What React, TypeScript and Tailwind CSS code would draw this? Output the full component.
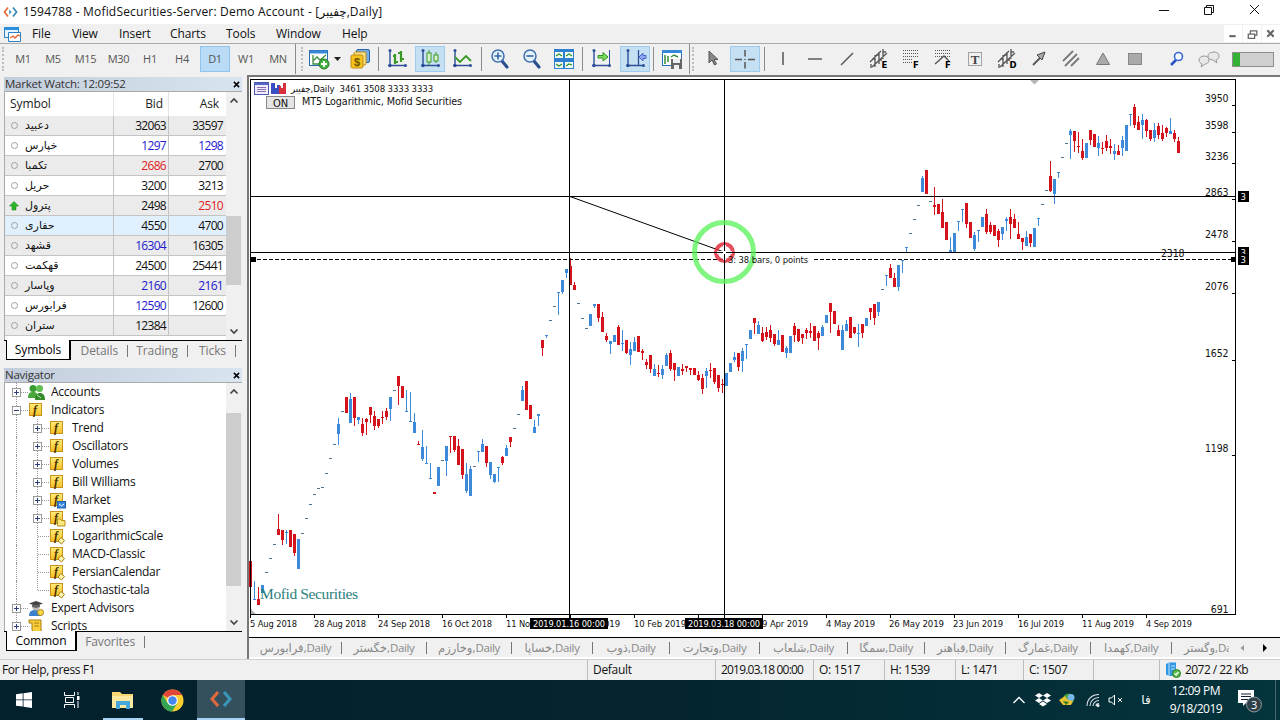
import React from 'react';
import clsx from 'clsx';

type Candle = [high: number, top: number, bottom: number, low: number, down: 0 | 1];

const UP = '#3c8ad8';
const DOWN = '#d4141c';

const CANDLES: Candle[] = [
    [561, 561, 587, 587, 1], [581, 599, 600, 600, 0], [587, 599, 605, 605, 1], [585, 585, 593, 593, 0], [572, 572, 573, 573, 0],
    [558, 558, 559, 559, 0], [544, 544, 545, 545, 0], [514, 529, 535, 535, 1], [530, 530, 540, 545, 1], [530, 532, 533, 544, 0],
    [530, 530, 547, 547, 1], [534, 534, 553, 556, 1], [539, 539, 569, 569, 0], [533, 533, 534, 534, 0], [518, 518, 519, 519, 0],
    [504, 504, 505, 505, 0], [494, 494, 495, 495, 0], [488, 488, 489, 489, 0], [487, 487, 488, 488, 0], [473, 473, 474, 474, 0],
    [458, 458, 459, 459, 0], [444, 444, 445, 445, 0], [418, 424, 434, 445, 0], [411, 411, 412, 412, 0], [397, 397, 413, 413, 1],
    [393, 399, 423, 423, 0], [397, 397, 418, 426, 1], [417, 417, 420, 424, 0], [418, 424, 433, 436, 1], [418, 419, 422, 435, 1],
    [407, 407, 415, 423, 1], [411, 416, 426, 430, 1], [419, 419, 426, 428, 1], [411, 417, 418, 424, 1], [408, 411, 417, 420, 1],
    [397, 397, 409, 421, 0], [390, 390, 391, 391, 0], [376, 376, 386, 405, 1], [386, 386, 398, 398, 1], [390, 411, 412, 412, 0],
    [392, 421, 422, 422, 0], [413, 422, 433, 433, 0], [441, 444, 445, 445, 1], [430, 447, 459, 461, 0], [446, 463, 464, 464, 0],
    [463, 478, 479, 479, 0], [492, 492, 494, 494, 1], [467, 467, 486, 486, 0], [460, 460, 461, 461, 0], [446, 446, 461, 476, 0],
    [436, 436, 437, 453, 1], [436, 436, 450, 452, 1], [439, 446, 465, 465, 1], [449, 449, 475, 479, 1], [463, 474, 491, 493, 0],
    [466, 469, 496, 496, 0], [466, 466, 467, 467, 0], [451, 451, 452, 462, 0], [439, 444, 452, 452, 0], [446, 446, 463, 467, 1],
    [462, 462, 475, 479, 0], [474, 474, 482, 483, 0], [467, 467, 468, 482, 0], [456, 457, 463, 465, 1], [445, 448, 456, 456, 0],
    [437, 437, 442, 447, 1], [428, 428, 429, 429, 0], [414, 414, 415, 415, 0], [386, 390, 401, 401, 0], [381, 381, 410, 410, 1],
    [405, 405, 419, 419, 1], [420, 427, 433, 433, 0], [414, 414, 416, 426, 0], [340, 340, 348, 356, 1], [335, 335, 336, 338, 0],
    [320, 320, 321, 321, 0], [306, 306, 307, 307, 0], [292, 292, 293, 315, 0], [280, 280, 292, 294, 0], [269, 269, 273, 278, 0],
    [258, 266, 285, 285, 1], [282, 285, 290, 290, 1], [303, 303, 304, 304, 0], [318, 318, 319, 319, 0], [328, 328, 329, 329, 0],
    [314, 314, 326, 326, 0], [304, 304, 306, 308, 0], [304, 304, 318, 322, 1], [312, 317, 332, 332, 1], [333, 336, 340, 342, 1],
    [341, 341, 344, 354, 0], [335, 335, 342, 342, 0], [325, 327, 345, 345, 1], [330, 343, 344, 351, 0], [340, 340, 353, 354, 1],
    [342, 349, 355, 365, 0], [337, 342, 351, 351, 0], [336, 336, 352, 352, 1], [349, 351, 353, 360, 1], [359, 362, 365, 369, 1],
    [355, 355, 369, 373, 1], [364, 369, 376, 376, 0], [365, 373, 374, 377, 1], [365, 369, 375, 379, 0], [353, 355, 366, 366, 0],
    [350, 353, 369, 371, 1], [363, 363, 370, 381, 1], [367, 367, 376, 376, 0], [364, 369, 371, 375, 1], [366, 366, 368, 372, 1],
    [368, 368, 370, 375, 1], [368, 368, 375, 375, 1], [371, 375, 380, 381, 1], [374, 378, 389, 394, 1], [368, 371, 376, 388, 0],
    [363, 370, 371, 378, 1], [368, 368, 382, 384, 1], [375, 375, 388, 392, 1], [379, 384, 385, 393, 1], [373, 373, 386, 386, 0],
    [363, 363, 372, 372, 0], [352, 357, 360, 362, 0], [353, 353, 367, 371, 1], [348, 351, 361, 372, 0], [344, 344, 345, 359, 0],
    [330, 330, 339, 339, 0], [318, 318, 323, 334, 1], [321, 325, 334, 334, 0], [327, 333, 341, 342, 1], [327, 332, 337, 340, 1],
    [325, 330, 338, 342, 1], [334, 334, 344, 346, 1], [330, 340, 345, 345, 0], [335, 335, 352, 352, 1], [346, 348, 353, 358, 0],
    [336, 336, 353, 353, 0], [323, 326, 335, 342, 1], [329, 329, 341, 342, 1], [334, 334, 338, 344, 1], [328, 330, 333, 339, 1],
    [323, 331, 333, 338, 1], [326, 326, 341, 341, 1], [331, 333, 338, 350, 1], [325, 327, 336, 336, 0], [315, 315, 323, 323, 0],
    [303, 303, 312, 333, 1], [311, 311, 324, 324, 1], [325, 330, 336, 336, 1], [325, 330, 350, 350, 0], [320, 324, 331, 331, 0],
    [317, 317, 338, 338, 1], [327, 327, 333, 334, 1], [324, 333, 334, 347, 0], [324, 324, 333, 338, 1], [318, 318, 326, 326, 0],
    [308, 308, 312, 320, 1], [304, 304, 318, 325, 1], [302, 302, 312, 316, 0], [289, 289, 290, 290, 0], [275, 275, 276, 286, 0],
    [264, 268, 278, 278, 1], [273, 278, 287, 287, 1], [265, 265, 287, 291, 0], [260, 260, 261, 273, 0], [247, 247, 248, 252, 0],
    [233, 233, 234, 234, 0], [219, 219, 220, 220, 0], [205, 205, 206, 206, 0], [176, 178, 192, 192, 0], [170, 170, 194, 194, 1],
    [201, 201, 202, 202, 0], [187, 205, 207, 215, 1], [204, 204, 214, 214, 1], [199, 212, 228, 228, 1], [222, 222, 240, 240, 1],
    [237, 250, 252, 252, 0], [233, 233, 253, 253, 0], [221, 221, 222, 231, 0], [209, 209, 210, 222, 0], [203, 203, 224, 228, 1],
    [222, 222, 238, 238, 1], [232, 235, 249, 251, 0], [230, 230, 231, 242, 0], [217, 217, 227, 227, 0], [209, 214, 232, 234, 1],
    [222, 225, 232, 234, 1], [225, 225, 236, 236, 1], [229, 231, 240, 247, 1], [227, 227, 234, 240, 0], [217, 219, 221, 231, 0],
    [209, 217, 224, 239, 1], [214, 219, 228, 228, 1], [222, 234, 239, 239, 1], [238, 238, 242, 250, 1], [231, 237, 246, 246, 0],
    [234, 234, 243, 247, 1], [228, 228, 247, 247, 0], [218, 218, 219, 226, 0], [204, 204, 205, 205, 0], [190, 190, 191, 191, 0],
    [161, 176, 191, 192, 1], [179, 179, 194, 204, 0], [172, 172, 173, 178, 0], [157, 157, 158, 158, 0], [143, 143, 144, 144, 0],
    [129, 131, 135, 159, 0], [131, 131, 141, 152, 1], [132, 146, 147, 153, 1], [139, 151, 158, 160, 1], [143, 143, 158, 158, 0],
    [130, 130, 140, 145, 1], [134, 134, 147, 147, 1], [136, 143, 148, 156, 0], [142, 148, 149, 154, 1], [135, 141, 148, 151, 1],
    [139, 146, 148, 154, 1], [144, 151, 154, 160, 0], [145, 151, 155, 155, 1], [136, 140, 148, 156, 0], [125, 125, 151, 151, 0],
    [114, 114, 115, 126, 0], [104, 107, 125, 128, 1], [116, 122, 130, 130, 1], [114, 120, 125, 139, 0], [119, 120, 131, 137, 1],
    [130, 130, 139, 141, 1], [123, 130, 138, 142, 0], [123, 126, 135, 139, 1], [125, 133, 139, 141, 1], [127, 128, 133, 137, 1],
    [118, 131, 134, 134, 0], [130, 133, 139, 142, 1], [137, 141, 153, 153, 1],
];

const PRICES: [string, number][] = [
    ['3950', 98], ['3598', 125], ['3236', 156], ['2863', 192], ['2478', 234],
    ['2076', 286], ['1652', 353], ['1198', 448], ['691', 609],
];

const DATES: [string, number, number][] = [
    ['5 Aug 2018', 250, 47], ['28 Aug 2018', 314, 52], ['24 Sep 2018', 378, 52], ['16 Oct 2018', 442, 50], ['11 Nov 2018', 506, 52],
    ['17 Jan 2019', 570, 50], ['10 Feb 2019', 634, 52], ['9 Apr 2019', 762, 46], ['4 May 2019', 826, 49], ['26 May 2019', 889, 55],
    ['23 Jun 2019', 953, 50], ['16 Jul 2019', 1018, 46], ['11 Aug 2019', 1082, 52], ['4 Sep 2019', 1146, 46],
];

const BLACK = '#111';
const BLUE = '#2418cc';
const RED = '#e01c24';

const QUOTES = [
    { name: 'دعبید', bid: '32063', ask: '33597', bc: BLACK, ac: BLACK },
    { name: 'خپارس', bid: '1297', ask: '1298', bc: BLUE, ac: BLUE },
    { name: 'تکمبا', bid: '2686', ask: '2700', bc: RED, ac: BLACK },
    { name: 'حریل', bid: '3200', ask: '3213', bc: BLACK, ac: BLACK },
    { name: 'پترول', bid: '2498', ask: '2510', bc: BLACK, ac: RED, up: true },
    { name: 'حفاری', bid: '4550', ask: '4700', bc: BLACK, ac: BLACK, active: true },
    { name: 'قشهد', bid: '16304', ask: '16305', bc: BLUE, ac: BLACK },
    { name: 'قهکمت', bid: '24500', ask: '25441', bc: BLACK, ac: BLACK },
    { name: 'وپاسار', bid: '2160', ask: '2161', bc: BLUE, ac: BLUE },
    { name: 'فرابورس', bid: '12590', ask: '12600', bc: BLUE, ac: BLACK },
    { name: 'ستران', bid: '12384', ask: '', bc: BLACK, ac: BLACK },
];

type NodeIcon = 'accounts' | 'f' | 'market' | 'folder' | 'custom' | 'expert' | 'script';

const TREE: { label: string; level: 0 | 1; icon: NodeIcon; box?: '+' | '-' }[] = [
    { label: 'Accounts', level: 0, icon: 'accounts', box: '+' },
    { label: 'Indicators', level: 0, icon: 'f', box: '-' },
    { label: 'Trend', level: 1, icon: 'f', box: '+' },
    { label: 'Oscillators', level: 1, icon: 'f', box: '+' },
    { label: 'Volumes', level: 1, icon: 'f', box: '+' },
    { label: 'Bill Williams', level: 1, icon: 'f', box: '+' },
    { label: 'Market', level: 1, icon: 'market', box: '+' },
    { label: 'Examples', level: 1, icon: 'folder', box: '+' },
    { label: 'LogarithmicScale', level: 1, icon: 'custom' },
    { label: 'MACD-Classic', level: 1, icon: 'custom' },
    { label: 'PersianCalendar', level: 1, icon: 'custom' },
    { label: 'Stochastic-tala', level: 1, icon: 'custom' },
    { label: 'Expert Advisors', level: 0, icon: 'expert', box: '+' },
    { label: 'Scripts', level: 0, icon: 'script', box: '+' },
];

const CHART_TABS: [string, string][] = [
    ['فرابورس', 'w-[92px]'], ['خگستر', 'w-[85px]'], ['وخارزم', 'w-[85px]'], ['خساپا', 'w-[81px]'], ['ذوب', 'w-[77px]'], ['وتجارت', 'w-[90px]'],
    ['شلعاب', 'w-[88px]'], ['سمگا', 'w-[77px]'], ['فباهنر', 'w-[81px]'], ['غمارگ', 'w-[85px]'], ['کهمدا', 'w-[81px]'],
];

const Glyph = ({ children, className = 'w-6 h-6' }: { children: React.ReactNode; className?: string }) => (
    <svg viewBox="0 0 24 24" fill="none" className={clsx('shrink-0', className)}>{children}</svg>
);

const Axes = () => (
    <>
        <path d="M5 3V20M3 18.5H21" stroke="#2c4f98" strokeWidth="1.4" />
        <circle cx="5" cy="3.5" r="1.5" fill="#2c4f98" />
        <circle cx="5" cy="18.5" r="1.7" fill="#2c4f98" />
        <circle cx="20.5" cy="18.5" r="1.5" fill="#2c4f98" />
    </>
);

const Slot = ({ children, on = false, className }: { children: React.ReactNode; on?: boolean; className?: string }) => (
    <div className={clsx('w-8 h-full flex items-center justify-center shrink-0', className)}>
        <div className={clsx('w-[30px] h-[26px] flex items-center justify-center', on && 'bg-[#c5dff3] border border-[#9ccbee]')}>{children}</div>
    </div>
);

const Sep = ({ className }: { className?: string }) => <div className={clsx('w-px bg-[#8c8c8c] shrink-0', className)} />;
const Grip = ({ className }: { className?: string }) => <div className={clsx('h-6 border-l-2 border-dotted border-[#bdbdbd] shrink-0', className)} />;

const ChannelGlyph = ({ letter }: { letter: string }) => (
    <Glyph>
        <path d="M3 15L14 4M5 20L20 6M8 8v12M4 17v4M12 5v12M16 2v10M12 8h-3M16 5h3M8 12H5M12 13h3" stroke="#555" strokeWidth="1.3" />
        <text x="14.5" y="21" fontSize="8.5" fontWeight="900" fill="#000" fontFamily="DejaVu Sans">{letter}</text>
    </Glyph>
);

const FiboGlyph = ({ fan = false }: { fan?: boolean }) => (
    <Glyph>
        <path d={fan ? 'M4 3.5h15M4 6.5h15M4 9.5h15' : 'M4 3.5h15M4 6.5h15M4 9.5h15M4 12.5h9M4 15.5h9'} stroke="#555" strokeWidth="1" strokeDasharray="1 1" />
        {fan && <path d="M4 17L13 9L18 14" stroke="#555" strokeWidth="1.4" />}
        <text x="14" y="21" fontSize="8.5" fontWeight="900" fill="#000" fontFamily="DejaVu Sans">F</text>
    </Glyph>
);

const FRAMES: [string, string][] = [
    ['M1', 'w-[30px]'], ['M5', 'w-[30px]'], ['M15', 'w-[35px]'], ['M30', 'w-[31px]'], ['H1', 'w-8'],
    ['H4', 'w-[34px] pr-0.5'], ['D1', 'w-[30px]'], ['W1', 'w-8'], ['MN', 'w-8'],
];

const Toolbar = () => (
    <div className="h-8 flex items-center bg-[#f0f0f0] border-t border-[#a9a9a9] pb-px shrink-0">
        <Grip className="ml-0.5 mr-1" />
        {FRAMES.map(([label, width]) => (
            <div key={label} className={clsx('h-[26px] flex items-center justify-center shrink-0 text-[11px] text-[#555] tracking-[-0.3px]', width, label === 'D1' && 'bg-[#b9dbf5] border border-[#8fc4ee]')}>{label}</div>
        ))}
        <Sep className="ml-px h-7.5" />
        <Grip className="ml-[5px]" />
        <Slot>
            <Glyph>
                <rect x="2.5" y="3.5" width="18" height="15" fill="#fff" stroke="#2a6db5" />
                <path d="M3 5h17" stroke="#3588d8" strokeWidth="3" />
                <path d="M6 8v9h8M6 14l4-4 3 3 6-5" stroke="#3b8d3b" strokeWidth="1.3" />
                <circle cx="17" cy="17" r="5" fill="#42b23e" stroke="#267a26" />
                <path d="M17 14v6M14 17h6" stroke="#fff" strokeWidth="1.8" />
            </Glyph>
        </Slot>
        <svg viewBox="0 0 8 5" className="w-2 h-[5px] -ml-px mr-0.5"><path d="M0 0h7L3.5 4z" fill="#222" /></svg>
        <Slot>
            <Glyph>
                <rect x="8.5" y="2.5" width="13" height="13" rx="1.5" fill="#77aae4" stroke="#2b62ac" />
                <rect x="6" y="5" width="12" height="13" rx="1.5" fill="#f8e28a" stroke="#b78a13" />
                <rect x="3" y="8" width="12" height="13" rx="1.5" fill="#f4c21c" stroke="#c08a10" />
                <text x="6" y="18.500" fontSize="11" fontWeight="700" fill="#6b5200" fontFamily="Liberation Sans">$</text>
            </Glyph>
        </Slot>
        <Sep className="h-6 ml-0.5 mr-0.5" />
        <Slot>
            <Glyph><Axes /><path d="M10 7v10M10 9h-2M10 15h3M16 4v11M16 6h-3M16 12h3" stroke="#3a9a28" strokeWidth="2.2" /></Glyph>
        </Slot>
        <Slot on className="ml-px">
            <Glyph><Axes /><path d="M11 3v15M18 5v11" stroke="#3a9a28" /><rect x="9" y="6" width="4" height="9" fill="#d8f4c8" stroke="#3a9a28" /><rect x="16" y="8" width="4" height="6" fill="#d8f4c8" stroke="#3a9a28" /></Glyph>
        </Slot>
        <Slot>
            <Glyph><Axes /><path d="M5 10l5 5 6-6 5 5" stroke="#3a9a28" strokeWidth="1.8" /></Glyph>
        </Slot>
        <Sep className="h-6 ml-[3px] mr-0.5" />
        {['M9 5.5v7M5.5 9h7', 'M5.5 9h7'].map((d) => (
            <Slot key={d}>
                <Glyph>
                    <path d="M14 14l5 6" stroke="#2a4f8d" strokeWidth="3.2" strokeLinecap="round" />
                    <circle cx="10" cy="9" r="6" fill="#e6f1fb" stroke="#3e6fae" strokeWidth="1.5" />
                    <path d={d} transform="translate(1 0)" stroke="#3565a5" strokeWidth="1.6" />
                </Glyph>
            </Slot>
        ))}
        <Slot>
            <Glyph>
                <path d="M2 2h20v20H2z" fill="#2f7fd0" />
                <path d="M3 5h8v6H3zM13 5h8v6h-8zM3 15h8v6H3zM13 15h8v6h-8z" fill="#effaf0" />
                <path d="M4 9l3-2 3 2M14 9l3-2 3 2M4 17l3 2 3-2M14 19l3-2 3 1" stroke="#2d8c2d" strokeWidth="1.2" />
            </Glyph>
        </Slot>
        <Sep className="h-6 mx-0.5" />
        <Slot>
            <Glyph><Axes /><path d="M20.5 3v15" stroke="#2c4f98" /><path d="M9 8.500h5V5.500l5 4.500-5 4v-3H9z" fill="#7cdc5c" stroke="#2e9724" /></Glyph>
        </Slot>
        <Slot on className="ml-0.5">
            <Glyph><Axes /><path d="M15.5 3v15" stroke="#2c4f98" strokeWidth="1.3" /><path d="M23 8.500h-3V6l-4 4 4 4v-2.500h3z" fill="#8fa8f5" stroke="#4666cc" /></Glyph>
        </Slot>
        <Sep className="h-6 mx-0.5" />
        <Slot>
            <Glyph>
                <rect x="2.500" y="3.500" width="19" height="15" fill="#fff" stroke="#2a6db5" />
                <path d="M2 4.500h20" stroke="#3588d8" strokeWidth="3" />
                <path d="M5 8v9M8 9v6M11 10l3-2 4 2" stroke="#3b8d3b" strokeWidth="1.5" />
                <path d="M11 12h11v10H11z" fill="#666" /><path d="M13 12h7v4h-7zM14 18h5v4h-5z" fill="#eee" />
            </Glyph>
        </Slot>
        <Sep className="ml-px h-7.5" />
        <Grip className="ml-0.5 mr-0.5" />
        <Slot><Glyph><path d="M9 4v12l3-3 2.500 5 2-1-2.500-4.500h4z" fill="#888" stroke="#555" /></Glyph></Slot>
        <Slot on className="ml-px"><Glyph><path d="M12 3v6.500M12 15v6.500M2 12.500h7M15 12.500h7M12 12v1" stroke="#555" strokeWidth="1.5" /></Glyph></Slot>
        <Sep className="h-6 ml-[3px] mr-0.5" />
        <Slot><Glyph><path d="M12 5v13" stroke="#555" strokeWidth="1.5" /></Glyph></Slot>
        <Slot><Glyph><path d="M5 12h14" stroke="#666" strokeWidth="1.6" /></Glyph></Slot>
        <Slot><Glyph><path d="M6 18L18 6" stroke="#555" strokeWidth="1.5" /></Glyph></Slot>
        <Slot><ChannelGlyph letter="E" /></Slot>
        <Slot><FiboGlyph /></Slot>
        <Slot><FiboGlyph fan /></Slot>
        <Slot>
            <Glyph>
                <rect x="5.500" y="5.500" width="13" height="13" stroke="#555" strokeDasharray="1 1" />
                <text x="7.700" y="17" fontSize="13" fontWeight="700" fill="#444" fontFamily="Liberation Serif">T</text>
            </Glyph>
        </Slot>
        <Slot><ChannelGlyph letter="D" /></Slot>
        <Slot><Glyph><path d="M6 18l7-7" stroke="#555" strokeWidth="1.8" /><path d="M18 5l-8 3 5 5z" fill="#aaa" stroke="#444" /></Glyph></Slot>
        <Slot><Glyph><path d="M4 14L14 4M6 19L18 7M12 19l8-8" stroke="#777" strokeWidth="1.8" /></Glyph></Slot>
        <Slot><Glyph><path d="M12 6l6.500 11.500h-13z" fill="#aaa" stroke="#777" /></Glyph></Slot>
        <Slot><Glyph><rect x="5.500" y="6.500" width="13" height="11" fill="#aaa" stroke="#888" /></Glyph></Slot>
        <div className="w-2.5 shrink-0" />
        <Slot><Glyph><path d="M6 18l5-5" stroke="#2850c8" strokeWidth="2.500" /><circle cx="13.500" cy="9.500" r="4" fill="#f2f8ff" stroke="#3b66d0" strokeWidth="1.600" /></Glyph></Slot>
        <Slot>
            <Glyph>
                <path d="M17 5c3 0 5 1.500 5 4s-1 3-3 4l1 3-4-3c-3 0-5-1.500-5-4s3-4 6-4z" fill="#e8e8e8" stroke="#999" />
                <path d="M7 9c3 0 5 1.500 5 4s-2 4-4 4l-4 3 1-3c-2-1-3-2-3-4s2-4 5-4z" fill="#e8e8e8" stroke="#999" />
            </Glyph>
        </Slot>
        <div className="ml-[7px] w-[42px] h-[15px] border border-[#8d8d8d] bg-[#d0d0d0] shrink-0"><div className="w-[7px] h-full bg-[#35b135]" /></div>
    </div>
);

const PanelTitle = ({ children }: { children: React.ReactNode }) => (
    <div className="h-3.5 flex items-center justify-between bg-gradient-to-r from-[#c3cddb] to-[#d9e4f1] pl-px pr-0.5 text-[11.5px] leading-none text-[#333] tracking-[-0.25px] shrink-0">
        <span>{children}</span>
        <svg viewBox="0 0 8 8" className="w-[7px] h-[7px]"><path d="M1 1l6 6M7 1L1 7" stroke="#000" strokeWidth="1.700" /></svg>
    </div>
);

const Arrow = ({ flip = false }: { flip?: boolean }) => (
    <svg viewBox="0 0 16 17" className={clsx('w-4 h-[17px] shrink-0', flip && 'rotate-180')}><path d="M4.500 10.500L8 7l3.500 3.500" fill="none" stroke="#444" strokeWidth="1.700" /></svg>
);

const ScrollBar = ({ thumb }: { thumb: string }) => (
    <div className="w-4 flex flex-col bg-[#f0f0f0] shrink-0">
        <Arrow />
        <div className="flex-1"><div className={clsx('w-[15px] bg-[#cdcdcd]', thumb)} /></div>
        <Arrow flip />
    </div>
);

const PanelTabs = ({ active, width, rest }: { active: string; width: string; rest: [string, string][] }) => (
    <div className="flex items-start border-t border-black h-[22px] pl-0.5 text-[12px] text-[#777] shrink-0">
        <div className={clsx('h-5 -mt-px bg-white border border-t-0 border-black border-r-2 flex items-center justify-center text-black', width)}>{active}</div>
        {rest.map(([label, w]) => (
            <div key={label} className={clsx('h-[19px] flex items-center justify-end', w)}>{label}<span className="w-px h-3 bg-[#777] ml-[9px]" /></div>
        ))}
    </div>
);

const MarketWatch = () => (
    <section className="h-[286px] flex flex-col shrink-0">
        <PanelTitle>Market Watch: 12:09:52</PanelTitle>
        <div className="h-[249px] flex border-l border-t border-[#aaa] bg-white shrink-0">
            <div className="flex-1 overflow-hidden">
                <div className="h-[24px] flex items-center text-[12px] text-[#222]">
                    <span className="w-[109px] h-full flex items-center pl-[5px] border-r border-[#e5e5e5]">Symbol</span>
                    <span className="w-[55px] h-full flex items-center justify-end pr-[5px] border-r border-[#e5e5e5]">Bid</span>
                    <span className="w-14 text-right pr-1.5">Ask</span>
                </div>
                {QUOTES.map((q, i) => (
                    <div key={q.name} className={clsx('h-5 flex items-center text-[12px] border-b border-[#c4c4c4]', q.active ? 'bg-[#e0f0fc]' : i % 2 ? 'bg-white' : 'bg-[#ebebeb]')}>
                        <div className="w-[109px] h-full flex items-center pl-[5px] border-r border-[#c4c4c4] text-[#111]">
                            {q.up
                                ? <svg viewBox="0 0 10 10" className="w-2.5 h-2.5 -ml-px mr-1.5"><path d="M5 .5L9.500 5H7v4H3V5H.5z" fill="#2fb52a" stroke="#1c8a1c" strokeWidth=".6" /></svg>
                                : <span className="w-[7px] h-[7px] rounded-full border-[1.5px] border-[#a0a0a0] ml-px mr-[7px]" />}
                            <span dir="rtl" className="text-[11px]">{q.name}</span>
                        </div>
                        <span className="w-[55px] h-full flex items-center justify-end pr-0.5 border-r border-[#c4c4c4] tracking-[-0.7px]" style={{ color: q.bc }}>{q.bid}</span>
                        <span className="w-14 text-right pr-0.5 tracking-[-0.7px]" style={{ color: q.ac }}>{q.ask}</span>
                    </div>
                ))}
            </div>
            <ScrollBar thumb="mt-[107px] h-[69px]" />
        </div>
        <PanelTabs active="Symbols" width="w-[65px]" rest={[['Details', 'w-[57px]'], ['Trading', 'w-[60px]'], ['Ticks', 'w-[48px]']]} />
    </section>
);

const TreeIcon = ({ kind }: { kind: NodeIcon }) => {
    if (kind === 'accounts') {
        return (
            <svg viewBox="0 0 17 17" className="w-[17px] h-[17px] shrink-0">
                <circle cx="5" cy="4.500" r="3.500" fill="#3a9b31" /><circle cx="11.500" cy="4.500" r="3.500" fill="#5fc04f" />
                <path d="M0 14c0-5 2-6 5-6s5 1 5 6z" fill="#48a83c" /><path d="M7 16c0-5 2-7 5-7s5 2 5 7z" fill="#368b2c" /><path d="M9 11l4 3" stroke="#b8eeb0" />
            </svg>
        );
    }
    if (kind === 'expert') {
        return (
            <svg viewBox="0 0 17 17" className="w-[17px] h-[17px] shrink-0">
                <path d="M1 16c0-4 2-6 6-6s6 2 6 6z" fill="#3b80cc" /><circle cx="8" cy="7" r="3.500" fill="#b9b9b9" />
                <path d="M1 3.500L8 1l7 2.500L8 6z" fill="#444" /><path d="M4 5v2l4 1 4-1V5" fill="#666" /><circle cx="12.500" cy="12.500" r="3" fill="#fbdc48" stroke="#a97c10" />
            </svg>
        );
    }
    if (kind === 'script') {
        return (
            <svg viewBox="0 0 17 17" className="w-[17px] h-[17px] shrink-0">
                <path d="M1 2h12v10l3 3H6l-2-3V5H1z" fill="#f8cf3a" stroke="#a97c10" /><path d="M6 5h5M6 8h5" stroke="#a97c10" />
            </svg>
        );
    }
    return (
        <svg viewBox="0 0 17 17" className="w-[17px] h-[17px] shrink-0">
            <defs><linearGradient id="gold" x1="0" y1="0" x2="0" y2="1"><stop stopColor="#ffee7a" /><stop offset="1" stopColor="#f6bf24" /></linearGradient></defs>
            <rect x="1.500" y="1.500" width="12" height="12" fill="url(#gold)" stroke="#c9921a" />
            <text x="5" y="11.500" fontSize="12" fontStyle="italic" fontWeight="700" fontFamily="Liberation Serif" fill="#4a3200">f</text>
            {kind === 'market' && <><rect x="8.500" y="9.500" width="8" height="6.500" fill="#3c87dc" stroke="#1f60b0" /><path d="M10 12l2.500 2 2.500-2" fill="none" stroke="#fff" /></>}
            {kind === 'folder' && <path d="M8.500 9h3l1 1.500H16V16H8.500z" fill="#fbe77a" stroke="#b98d1c" />}
            {kind === 'custom' && <path d="M12 9.500l3.500 3-3 3.500-3.500-3z" fill="#fff4b0" stroke="#a97c10" />}
        </svg>
    );
};

const Navigator = () => (
    <section className="flex flex-col">
        <PanelTitle>Navigator</PanelTitle>
        <div className="h-[249px] flex border-l border-t border-[#aaa] bg-white shrink-0">
            <div className="flex-1 overflow-hidden">
                {TREE.map((n, i) => (
                    <div key={n.label} className="h-[18px] flex items-center text-[12px] text-[#111] tracking-[-0.25px]">
                        {n.level === 1 && (
                            <span className="w-[21px] h-full shrink-0 flex"><span className="ml-[11px] h-full border-l border-dotted border-[#999]" /></span>
                        )}
                        <svg viewBox="1 0 23 18" className="w-[23px] h-[18px] shrink-0">
                            <path d={i === 11 ? 'M12.500 0v9' : 'M12.500 0v18'} stroke="#999" strokeDasharray="1 1" />
                            <path d="M13 9.500h11" stroke="#999" strokeDasharray="1 1" />
                            {n.box && <><rect x="8.500" y="5.500" width="8" height="8" fill="#fff" stroke="#999" /><path d={n.box === '+' ? 'M10 9.500h5M12.500 7v5' : 'M10 9.500h5'} stroke="#2b3f7a" /></>}
                        </svg>
                        <TreeIcon kind={n.icon} />
                        <span className="ml-[6px] whitespace-nowrap">{n.label}</span>
                    </div>
                ))}
            </div>
            <ScrollBar thumb="mt-[13px] h-[173px]" />
        </div>
        <PanelTabs active="Common" width="w-[71px]" rest={[['Favorites', 'w-[68px]']]} />
    </section>
);

const ChartText = ({ x, y, w, children, fill = '#111', size = 11, end = false }: { x: number; y: number; w: number; children: string; fill?: string; size?: number; end?: boolean }) => (
    <text x={x} y={y} textLength={w} lengthAdjust="spacingAndGlyphs" fontSize={size} fill={fill} textAnchor={end ? 'end' : 'start'} fontFamily="'DejaVu Sans Condensed', 'DejaVu Sans', sans-serif">{children}</text>
);

const Chart = () => (
    <svg viewBox="249 77 1029 560" className="w-[1029px] h-[560px] block shrink-0">
        <rect x="249" y="77" width="1029" height="560" fill="#fff" />
        <g shapeRendering="crispEdges">
            {CANDLES.map(([high, top, bottom, low, down], i) => {
                const x = 250 + i * 4;
                const flat = low - high === 1;
                const color = down ? DOWN : flat ? '#50708c' : UP;
                return (
                    <g key={i} fill={color}>
                        <rect x={x} y={high} width="1" height={low - high} />
                        <rect x={x - 1} y={top} width="3" height={bottom - top} />
                    </g>
                );
            })}
        </g>
        <text x="260" y="599" textLength="98" fontSize="15.500" fill="#2a8080" fontFamily="Liberation Serif">Mofid Securities</text>
        <path d="M251 609l5 5h-5zM1030 80h9l-4.500 4.500z" fill="#b5b5b5" />

        <g shapeRendering="crispEdges" stroke="#000" fill="none">
            <path d="M250.500 79V614.500H1235.500V79.500H250" />
            {DATES.map(([label], i) => <path key={label} d={`M${250.5 + 64 * (i > 6 ? i + 1 : i)} 614v4`} />)}
            <path d="M698.500 614v4" />
            {PRICES.slice(0, 8).map(([label, y]) => <path key={label} d={`M1232 ${y + 7.5}h3`} />)}
            <path d="M569.500 79V618M724.500 79V618M250 196.500H1235M250 252.500H1235" />
            <path d="M257 259.500H726M814 259.500H1231" strokeDasharray="3.500 2.500" />
        </g>
        <path d="M570 196.500L724 252" stroke="#000" strokeWidth="1" />
        <path d="M251 257h5v5h-5zM1231 257h5v5h-5z" fill="#000" />
        {PRICES.map(([label, y]) => <ChartText key={label} x={1228.5} y={y + 4} w={label.length * 5.9} end>{label}</ChartText>)}
        <ChartText x={1161} y={257} w={23.500}>2318</ChartText>

        <circle cx="724" cy="252" r="29.500" fill="none" stroke="#5cf45c" strokeOpacity=".78" strokeWidth="5" />
        <circle cx="724.500" cy="252.500" r="8.500" fill="none" stroke="#e0303c" strokeOpacity=".85" strokeWidth="4" />
        <path d="M724.500 245v15M717 252.500h15" stroke="#fff" strokeWidth="3" />
        <path d="M724.500 242v9M724.500 254v9M714 252.500h9M726 252.500h9" stroke="#000" />
        <ChartText x={728} y={263} w={80} size={9.500}>3: 38 bars, 0 points</ChartText>

        {[196, 252, 259].map((y) => (
            <g key={y}>
                <rect x="1238" y={y - 5} width="11" height="11" fill="#000" />
                <text x="1240.500" y={y + 4} fontSize="9.500" fill="#fff" fontFamily="DejaVu Sans Condensed">3</text>
            </g>
        ))}
        {DATES.map(([label, x, w]) => <ChartText key={label} x={x} y={627} w={w} size={9.500}>{label}</ChartText>)}
        <rect x="530" y="618" width="78" height="11" fill="#000" />
        <rect x="685" y="618" width="78" height="11" fill="#000" />
        <ChartText x={533} y={627} w={72} size={9.500} fill="#fff">2019.01.16 00:00</ChartText>
        <ChartText x={688} y={627} w={72} size={9.500} fill="#fff">2019.03.18 00:00</ChartText>

        <rect x="254.500" y="82.500" width="14" height="12" fill="#eef" stroke="#4a58b0" />
        <path d="M255 84h13" stroke="#5564c0" strokeWidth="2" /><path d="M257 87.500h9M257 89.500h9M257 91.500h9" stroke="#8a6fb0" />
        <path d="M271 83h4v5h2v-3h3v9h-9z" fill="#3a4fc4" /><path d="M286 83h-3v5h-2v-2h-2v8h7z" fill="#d8303c" />
        <text x="291" y="92" textLength="142" lengthAdjust="spacingAndGlyphs" fontSize="9.500" fill="#111" direction="ltr" fontFamily="'DejaVu Sans Condensed', 'DejaVu Sans'">{'چفیبر,Daily\u00a0\u00a03461 3508 3333 3333'}</text>
        <rect x="266.500" y="96.500" width="28" height="12" fill="#e4e4e4" stroke="#888" />
        <ChartText x={273} y={107} w={15} size={10.500}>ON</ChartText>
        <ChartText x={302} y={105} w={160} size={11}>MT5 Logarithmic, Mofid Securities</ChartText>
    </svg>
);

const ChartTabs = () => (
    <div className="h-[20px] flex items-center bg-[#f0f0f0] border-t border-black text-[11.5px] text-[#888] tracking-[-0.35px] overflow-hidden pl-px shrink-0">
        {CHART_TABS.map(([name, w]) => (
            <div key={name} dir="ltr" className={clsx('flex items-center shrink-0 whitespace-nowrap', w)}>
                <span className="flex-1 text-center">{name},Daily</span>
                <span className="w-px h-3 bg-[#777]" />
            </div>
        ))}
        <div className="w-[57px] pl-3 overflow-hidden whitespace-nowrap shrink-0">وگستر,Daily</div>
        <svg viewBox="0 0 40 10" className="w-10 h-2.5 ml-2"><path d="M7 2v6L3.500 5z" fill="#999" /><path d="M26 1v8l4-4z" fill="#000" /></svg>
    </div>
);

const StatusBar = () => {
    const cell = 'h-full flex items-center pl-[5px] border-l border-[#bcbcbc] shrink-0 whitespace-nowrap';
    return (
        <div className="h-[21px] flex items-center bg-[#f0f0f0] border-t border-[#d0d0d0] text-[12px] text-[#111] shrink-0">
            <div className="w-[587px] pl-0.5 tracking-[-0.4px]">For Help, press F1</div>
            <div className={clsx(cell, 'w-32 tracking-[-0.3px]')}>Default</div>
            <div className={clsx(cell, 'w-[98px] tracking-[-0.8px]')}>2019.03.18 00:00</div>
            <div className={clsx(cell, 'w-[71px] tracking-[-0.3px]')}>O: 1517</div>
            <div className={clsx(cell, 'w-[71px] tracking-[-0.4px]')}>H: 1539</div>
            <div className={clsx(cell, 'w-[68px] tracking-[-0.4px]')}>L: 1471</div>
            <div className={clsx(cell, 'w-[70px] tracking-[-0.4px]')}>C: 1507</div>
            <div className={clsx(cell, 'w-[66px]')} />
            <div className={clsx(cell, 'flex-1 tracking-[-0.55px]')}>
                <svg viewBox="0 0 16 16" className="w-4 h-4 mr-1">
                    <path d="M1 2l3-1.500h7V14H4l-3-1.500z" fill="#2f97e4" /><path d="M4 1v13M6 4h4M6 7h4" stroke="#c5e6ff" /><circle cx="11.500" cy="11.500" r="4" fill="#57b947" stroke="#317f28" /><path d="M9.500 11.500l1.500 1.500 2.500-3" fill="none" stroke="#fff" strokeWidth="1.300" />
                </svg>
                2072 / 22 Kb
            </div>
        </div>
    );
};

const TaskBar = () => (
    <div className="h-10 flex items-center bg-gradient-to-r from-[#03202d] via-[#04242f] to-[#04343d] text-white shrink-0">
        <div className="w-12 flex justify-center">
            <svg viewBox="0 0 16 16" className="w-4 h-4" fill="#fff"><path d="M0 2.200L6.700 1.300V7.500H0zM7.500 1.200L16 0V7.500H7.500zM0 8.300H6.700V14.600L0 13.700zM7.500 8.300H16V16L7.500 14.800z" /></svg>
        </div>
        <div className="w-12 flex justify-center">
            <svg viewBox="0 0 16 16" className="w-4 h-4" fill="none" stroke="#fff"><path d="M.5 0v3.500h10V0M.5 16v-3.500h10V16M1.500 5.500h8v5h-8zM14 0v3M14 9v7" /><path d="M13 4h2.500v4H13z" fill="#fff" stroke="none" /></svg>
        </div>
        <div className="w-[54px] h-full flex items-center justify-center relative">
            <svg viewBox="0 0 22 18" className="w-[22px] h-[18px]"><path d="M0 1h8l2 2h11v14H0z" fill="#f6d873" /><path d="M0 5h21v12H0z" fill="#fce9a0" /><path d="M4 18v-8h14v8h-4v-4H8v4z" fill="#45a7dc" /></svg>
            <div className="absolute bottom-0 left-[7px] w-10 h-0.5 bg-[#a8d3f5]" />
        </div>
        <div className="w-[47px] flex justify-center pr-[3px]">
            <svg viewBox="0 0 24 24" className="w-[23px] h-[23px]">
                <circle cx="12" cy="12" r="11.500" fill="#fbce30" /><path d="M12 12L2 6.300A11.500 11.500 0 0 1 22 6.300H12z" fill="#e2453a" /><path d="M12 12L7 14.800 2 6.300A11.500 11.500 0 0 0 11.500 23.500L17 14.800z" fill="#33a453" />
                <circle cx="12" cy="12" r="5.600" fill="#fff" /><circle cx="12" cy="12" r="4.400" fill="#4586ee" />
            </svg>
        </div>
        <div className="w-12 h-full flex items-center justify-center bg-[#35505d] border-b-2 border-[#a8d3f5]">
            <svg viewBox="0 0 24 16" className="w-6 h-4" fill="none" strokeWidth="3"><path d="M9 1L3 8l6 7" stroke="#e0693e" /><path d="M15 1l6 7-6 7" stroke="#3896b8" /></svg>
        </div>
        <div className="flex-1" />
        <div className="flex items-center h-full">
            <svg viewBox="0 0 14 14" className="w-3.5 h-3.5 mr-[9px]" fill="none" stroke="#fff" strokeWidth="1.300"><path d="M1.500 10L7 4.500l5.500 5.500" /></svg>
            <svg viewBox="0 0 16 14" className="w-4 h-3.5 mr-2" fill="#fff"><path d="M4 0l4 2.500L4 5 0 2.500zM12 0l4 2.500L12 5 8 2.500zM4 5l4 2.500L4 10 0 7.500zM12 5l4 2.500L12 10 8 7.500zM8 8.500l4 2.500-4 2.500L4 11z" /></svg>
            <svg viewBox="0 0 17 14" className="w-[17px] h-3.5 mr-2.5"><circle cx="9.500" cy="6" r="5.500" fill="#3f9f3a" /><circle cx="12" cy="4.500" r="3.500" fill="#78b8e8" /><path d="M0 7l6-4 3 4 5 1-2 4H4z" fill="#e6c236" /><path d="M4 8l6 1-3 3z" fill="#2f7d1f" /></svg>
            <svg viewBox="0 0 14 14" className="w-3.5 h-3.5 mr-2" fill="none" stroke="#dfe8ea" strokeWidth="1.100"><path d="M1 13C1 6 6 1.500 13 1.500M4 13c0-5 4-8.500 9-8.500M7 13c0-3 3-5.500 6-5.500M10 13c0-1 1-2.500 3-2.500" /><circle cx="12" cy="12.500" r="1" fill="#fff" /></svg>
            <svg viewBox="0 0 16 12" className="w-4 h-3 mr-2.5" fill="none" stroke="#fff"><path d="M1 4h2.500L6.500 1v10L3.500 8H1zM10 4l4 4M14 4l-4 4" /></svg>
            <span className="w-6 text-[12px] text-center">فا</span>
            <div className="w-[76px] text-center text-[12px] leading-[18px]">
                <div className="tracking-[-0.4px]">12:09 PM</div>
                <div className="tracking-[-0.5px]">9/18/2019</div>
            </div>
            <svg viewBox="0 0 26 26" className="w-[26px] h-[26px] ml-[3px] mr-3">
                <path d="M1 3h16v13H9l-3 3v-3H1z" fill="#fff" /><path d="M4 7h10M4 9.500h10M4 12.500h7" stroke="#123" />
                <circle cx="17" cy="17.500" r="7.500" fill="#2f4148" stroke="#8a979c" /><text x="14" y="21.500" fontSize="11" fill="#fff" fontFamily="Open Sans">3</text>
            </svg>
            <div className="w-px h-full bg-[#4a6870] mr-1" />
        </div>
    </div>
);

const TitleBar = () => (
    <div className="h-6 flex items-center bg-white text-[12px] text-[#111] pl-[3px] shrink-0">
        <svg viewBox="0 0 15 12" className="w-[15px] h-3 mr-[5px]" fill="none" strokeWidth="1.800"><path d="M5 1.500L1.500 6 5 10.500" stroke="#e57040" /><path d="M10 1.500L13.500 6 10 10.500" stroke="#3a8ab8" /><path d="M6 3.500v5L9 6z" fill="#5d9fc4" stroke="none" /></svg>
        <span dir="ltr" className="font-stretch-95% tracking-[0.19px]">1594788 - MofidSecurities-Server: Demo Account - [چفیبر,Daily]</span>
        <div className="flex-1" />
        <svg viewBox="0 0 120 12" className="w-[120px] h-3 mr-1 -mt-1" fill="none" stroke="#111"><path d="M3 6.500h10M48.500 3.500h7v7h-7zM50.500 3.500v-2h7v7h-2M94 1l9 9M103 1l-9 9" /></svg>
    </div>
);

const MenuBar = () => (
    <div className="h-[19px] flex items-center bg-[#f0f0f0] text-[12px] text-[#111] shrink-0">
        <svg viewBox="0 0 18 16" className="w-[18px] h-4 ml-1"><path d="M.5 1.500h14v10H.5z" fill="#e8f4ff" stroke="#2b7fc4" /><path d="M0 2.500h15" stroke="#2b8fe0" strokeWidth="3" /><path d="M4.500 6.500h12v9h-12z" fill="#fff" stroke="#2b7fc4" /><path d="M6 12l3-2 2 2 3-3 2 1" stroke="#e86030" fill="none" strokeWidth="1.300" /></svg>
        <span className="w-10 ml-2.5">File</span>
        <span className="w-[47px]">View</span>
        <span className="w-[51px]">Insert</span>
        <span className="w-14">Charts</span>
        <span className="w-[50px]">Tools</span>
        <span className="w-[66px]">Window</span>
        <span>Help</span>
        <div className="flex-1" />
        <div className="h-[17px] flex gap-px">
            {['M4 10.500h6', 'M4 8.500h6v4H4zM6 8V5.500h6v4h-2', 'M4 5l6 6M10 5l-6 6'].map((d, i) => (
                <svg key={d} viewBox="0 0 15 16" className="w-[18px] h-full bg-white" fill="none" stroke="#666" strokeWidth={i === 1 ? 1.2 : 2}><path d={d} /></svg>
            ))}
        </div>
    </div>
);

const App: React.FC = () => (
    <div className="w-[1280px] h-[720px] flex flex-col overflow-hidden bg-[#f0f0f0] font-['Open_Sans','DejaVu_Sans',sans-serif] font-stretch-90% tracking-[-0.1px]">
        <TitleBar />
        <MenuBar />
        <Toolbar />
        <main className="flex-1 min-h-0 flex">
            <div className="w-[242px] pl-1 pt-[2px] flex flex-col gap-[5px] shrink-0">
                <MarketWatch />
                <Navigator />
            </div>
            <div className="ml-[5px] flex-1 min-w-0 flex flex-col border-l-2 border-t-2 border-[#777] bg-white">
                <Chart />
                <ChartTabs />
            </div>
        </main>
        <StatusBar />
        <TaskBar />
    </div>
);

export default App;
